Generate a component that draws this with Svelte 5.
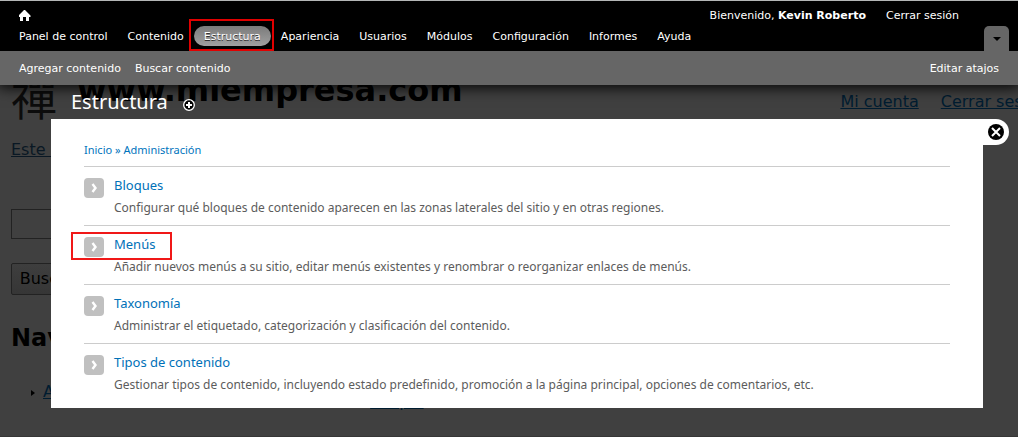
<script>
  const menu = ['Panel de control', 'Contenido', 'Estructura', 'Apariencia', 'Usuarios', 'Módulos', 'Configuración', 'Informes', 'Ayuda'];
  const active = 'Estructura';
  const highlighted = 'Menús';
  const sections = [
    { name: 'Bloques', text: 'Configurar qué bloques de contenido aparecen en las zonas laterales del sitio y en otras regiones.' },
    { name: 'Menús', text: 'Añadir nuevos menús a su sitio, editar menús existentes y renombrar o reorganizar enlaces de menús.' },
    { name: 'Taxonomía', text: 'Administrar el etiquetado, categorización y clasificación del contenido.' },
    { name: 'Tipos de contenido', text: 'Gestionar tipos de contenido, incluyendo estado predefinido, promoción a la página principal, opciones de comentarios, etc.' }
  ];
</script>

<div class="screen">
  <div class="site">
    <div class="site-head">
      <span class="logo">禪</span>
      <span class="site-name">www.miempresa.com</span>
      <nav class="user-links"><a href="#cuenta">Mi cuenta</a><a href="#sesion">Cerrar sesión</a></nav>
    </div>
    <a class="own-site" href="#sitio">Este sitio</a>
    <form class="search">
      <input type="text" aria-label="Buscar en el sitio" />
      <button type="button">Buscar</button>
    </form>
    <h2>Navegación</h2>
    <div class="site-foot">
      <span class="bullet"></span>
      <a href="#agregar">Agregar contenido</a>
      <a class="more" href="#drupal">Drupal</a>
    </div>
  </div>

  <header>
    <div class="bar">
      <div class="bar-row">
        <a class="home" href="#inicio" aria-label="Inicio">
          <svg width="12" height="12" viewBox="0 0 12 12"><path d="M5 0h1l5.5 5.5V7H10v4H7V7H4v4H1V7H-.5V5.5Z" fill="#fff" /></svg>
        </a>
        <div class="account">
          <span>Bienvenido, <a href="#usuario"><strong>Kevin Roberto</strong></a></span>
          <a href="#salir">Cerrar sesión</a>
        </div>
      </div>
      <nav class="main-menu">
        {#each menu as item}
          <a href="#{item}" class:active={item === active}>{item}</a>
        {/each}
        <button class="toggle" aria-label="Ocultar atajos">
          <svg width="8" height="4" viewBox="0 0 8 4"><path d="M0 0h8L4 4Z" fill="#000" /></svg>
        </button>
      </nav>
    </div>
    <nav class="shortcuts">
      <a href="#agregar-contenido">Agregar contenido</a>
      <a href="#buscar-contenido">Buscar contenido</a>
      <a class="edit" href="#atajos">Editar atajos</a>
    </nav>
  </header>

  <main>
    <div class="title">
      <h1>Estructura</h1>
      <button class="add" aria-label="Agregar a los atajos">
        <svg width="12" height="12" viewBox="0 0 12 12"><circle cx="6" cy="6" r="5.3" fill="#000" stroke="#fff" stroke-width="1.3" /><path d="M6 3v6M3 6h6" stroke="#fff" stroke-width="2" /></svg>
      </button>
    </div>
    <div class="panel">
      <button class="close" aria-label="Cerrar">
        <svg width="16" height="16" viewBox="0 0 16 16"><circle cx="8" cy="8" r="8" fill="#000" /><path d="m4 4 8 8m0-8-8 8" stroke="#fff" stroke-width="2" /></svg>
      </button>
      <div class="crumbs"><a href="#inicio">Inicio</a> » <a href="#admin">Administración</a></div>
      <ul>
        {#each sections as s}
          <li class:marked={s.name === highlighted}>
            <svg width="20" height="20" viewBox="0 0 20 20"><rect width="20" height="20" rx="4" fill="#c0c0c0" /><path d="m8.500 6 3 4-3 4" fill="none" stroke="#fff" stroke-width="2.4" /></svg>
            <div>
              <a href="#{s.name}">{s.name}</a>
              <p>{s.text}</p>
            </div>
          </li>
        {/each}
      </ul>
    </div>
  </main>
</div>

<style>
  :global(body) { margin: 0; background: #404040; }
  .screen, .screen *, .screen ::before, .screen ::after { box-sizing: border-box; }
  .screen { position: relative; min-height: 100vh; overflow: hidden; font: 11px/20px Verdana, "DejaVu Sans", sans-serif; }
  a { color: inherit; text-decoration: none; white-space: nowrap; }
  button { padding: 0; border: 0; background: none; font: inherit; cursor: pointer; }
  svg { display: block; flex: none; }

  .site { position: absolute; inset: 0; padding: 67px 0 0 11px; overflow: hidden; border-bottom: 1px solid #363636; color: #000; font-size: 16px; line-height: 24px; }
  .site a { color: #001c30; text-decoration: underline; }
  .site-head { display: flex; height: 71px; white-space: nowrap; }
  .logo { width: 66px; font: 46px/56px "Noto Sans CJK TC", sans-serif; color: #0c0c0c; }
  .site-name { font-size: 32px; font-weight: bold; line-height: 46px; }
  .user-links { display: flex; gap: 22px; margin: 23px -29px 0 auto; }
  .site .own-site { display: block; color: #0a1824; }
  .search { display: flex; flex-direction: column; align-items: flex-start; gap: 24px; margin-top: 47px; }
  .search input { width: 180px; height: 30px; border: 1px solid #222; background: #404040; }
  .search button { width: 72px; height: 32px; border: 1px solid #222; border-radius: 2px; background: linear-gradient(#3e3e3e, #363636); color: #000; }
  h2 { margin: 28px 0 0; font-size: 24px; line-height: 30px; }
  .site-foot { display: flex; align-items: flex-start; margin: 27px 0 0 20px; }
  .bullet { border: 3px solid transparent; border-left: 4px solid #000; border-right: 0; margin: 10px 8px 0 0; }
  .more { margin: 10px 0 0 179px; }

  header { position: relative; color: #fff; box-shadow: 0 0 14px 2px #000; }
  .bar { border-top: 1px solid #b4b6b6; background: #000; }
  .bar-row { display: flex; align-items: center; justify-content: space-between; height: 25px; padding: 5px 59px 0 19px; }
  .account { display: flex; gap: 20px; line-height: 22px; }
  .main-menu { display: flex; height: 25px; padding: 0 9px; }
  .main-menu a { height: 20px; padding: 0 10px; border-radius: 10px; line-height: 21px; }
  .main-menu .active { position: relative; background: linear-gradient(#7b7b7b, #a0a0a0); text-shadow: 0 1px 0 #333; }
  .active::after { content: ""; position: absolute; inset: -7px -3px -5px -5px; border: 2px solid #e00000; }
  .toggle { display: grid; place-items: center; width: 25px; height: 25px; margin-left: auto; border-radius: 5px 5px 0 0; background: #666; }
  .shortcuts { display: flex; gap: 14px; height: 34px; padding: 8px 19px 6px; background: #666; }
  .edit { margin-left: auto; }

  main { position: relative; margin: 0 35px 0 51px; font-family: "Lucida Grande", "Noto Sans", sans-serif; }
  .title { display: flex; align-items: center; height: 34px; padding-left: 20px; gap: 15px; color: #fff; }
  h1 { margin: 0; font-size: 20px; font-weight: normal; line-height: 34px; }
  .add { margin-top: 6px; }
  .panel { position: relative; padding: 20px 33px 6px; background: #fff; }
  .close { position: absolute; top: 0; left: 100%; width: 26px; height: 26px; padding: 5px; border-radius: 0 13px 13px 0; background: #fff; }
  .crumbs { height: 27px; line-height: 22px; color: #0074bd; }
  ul { margin: 0; padding: 0; list-style: none; }
  li { position: relative; display: flex; gap: 10px; height: 59px; padding-top: 8px; border-top: 1px solid #ccc; }
  li svg { margin-top: 3px; }
  li a { display: block; color: #0071b8; font-size: 13px; line-height: 20px; }
  li p { margin: 0; color: #5c5c5c; font-size: 12px; line-height: 26px; white-space: nowrap; }
  .marked::before { content: ""; position: absolute; top: 6px; left: -13px; width: 101px; height: 28px; border: 2px solid #f01818; }
</style>
